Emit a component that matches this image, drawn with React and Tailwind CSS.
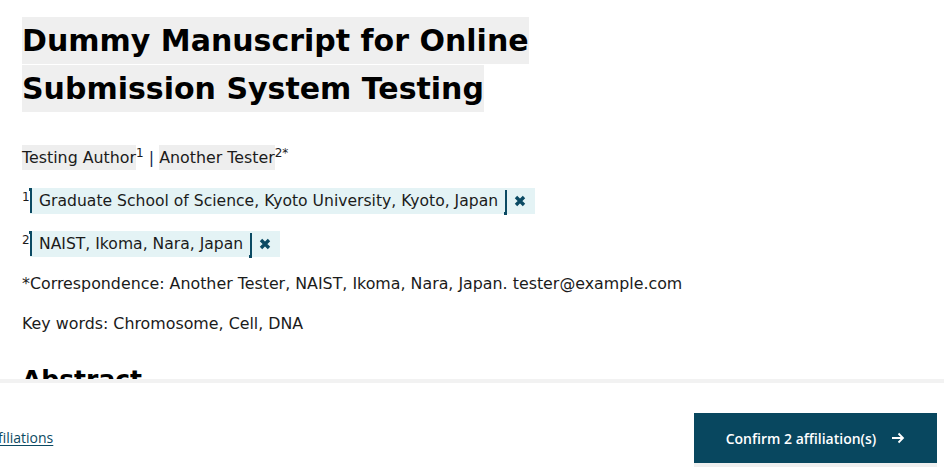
import React from "react";

function XIcon() {
  return (
    <svg width="12" height="12" viewBox="0 0 12 12" aria-hidden="true">
      <path d="M2 2 L10 10 M10 2 L2 10" stroke="#0b4a63" strokeWidth="3.4" strokeLinecap="butt" />
    </svg>
  );
}

function Affil({ n, text }) {
  return (
    <p className="flex items-start h-[26px]">
      <sup className="text-[12px] leading-none mt-[3px] w-[8px] top-0">{n}</sup>
      <span className="flex items-center h-[26px] bg-[#e4f3f5]">
        <span className="relative w-[2px] h-[25px] bg-[#0b4a63] self-start">
          <span className="absolute top-0 left-[-1px] w-[3px] h-[3px] bg-[#0b4a63]" />
        </span>
        <span className="pl-[7px] pr-[7px] text-[15.6px]">{text}</span>
        <span className="relative w-[2px] h-[25px] bg-[#0b4a63] self-end translate-y-[1px]">
          <span className="absolute bottom-0 left-[-1px] w-[3px] h-[3px] bg-[#0b4a63]" />
        </span>
        <span className="flex items-center pl-[7px] pr-[9px]">
          <XIcon />
        </span>
      </span>
    </p>
  );
}

export default function App() {
  return (
    <div className="relative w-[944px] h-[472px] overflow-hidden bg-white text-[#1b1b1b] font-['DejaVu_Sans',sans-serif]">
      <div className="px-[22px] pt-[17px]">
        <h1 className="text-[30px] leading-[48px] font-bold text-black w-[530px]">
          <span className="bg-[#efefef] py-[6px] box-decoration-clone">Dummy Manuscript for Online Submission System Testing</span>
        </h1>
        <div className="mt-[32px] flex flex-col gap-[17px] text-[15.85px] leading-[26px]">
          <p className="h-[26px]">
            <span className="bg-[#eeeeee] py-[3px]">Testing Author</span>
            <sup className="text-[12px]">1</sup>
            <span className="text-[#0b2a55]"> | </span>
            <span className="bg-[#eeeeee] py-[3px]">Another Tester</span>
            <sup className="text-[12px]">2*</sup>
          </p>
          <Affil n="1" text="Graduate School of Science, Kyoto University, Kyoto, Japan" />
          <Affil n="2" text="NAIST, Ikoma, Nara, Japan" />
          <p className="mt-[-3px]">*Correspondence: Another Tester, NAIST, Ikoma, Nara, Japan. tester@example.com</p>
          <p className="mt-[-3px]">Key words: Chromosome, Cell, DNA</p>
          <h2 className="mt-[10px] text-[25px] font-bold leading-[32px] text-black">Abstract</h2>
        </div>
      </div>

      <div className="absolute left-0 right-0 bottom-0 h-[93px] bg-white border-t-4 border-[#f2f2f2] overflow-hidden font-['Open_Sans',sans-serif]">
        <div className="flex items-end justify-between h-full pb-[9px] pr-[7px]">
          <a href="#" className="ml-[-43px] mb-[16px] text-[14px] leading-[18px] text-[#0b4a63] underline underline-offset-2">
            Edit affiliations
          </a>
          <button className="w-[243px] h-[50px] bg-[#08475f] text-white text-[14px] font-semibold flex items-center justify-center gap-[15px] shadow-[0_4px_0_#efefef]">
            <span>Confirm 2 affiliation(s)</span>
            <svg width="14" height="14" viewBox="0 0 14 14" aria-hidden="true">
              <path d="M1 7 H12 M7.5 2.5 L12 7 L7.5 11.5" stroke="white" strokeWidth="1.8" fill="none" />
            </svg>
          </button>
        </div>
      </div>
    </div>
  );
}
